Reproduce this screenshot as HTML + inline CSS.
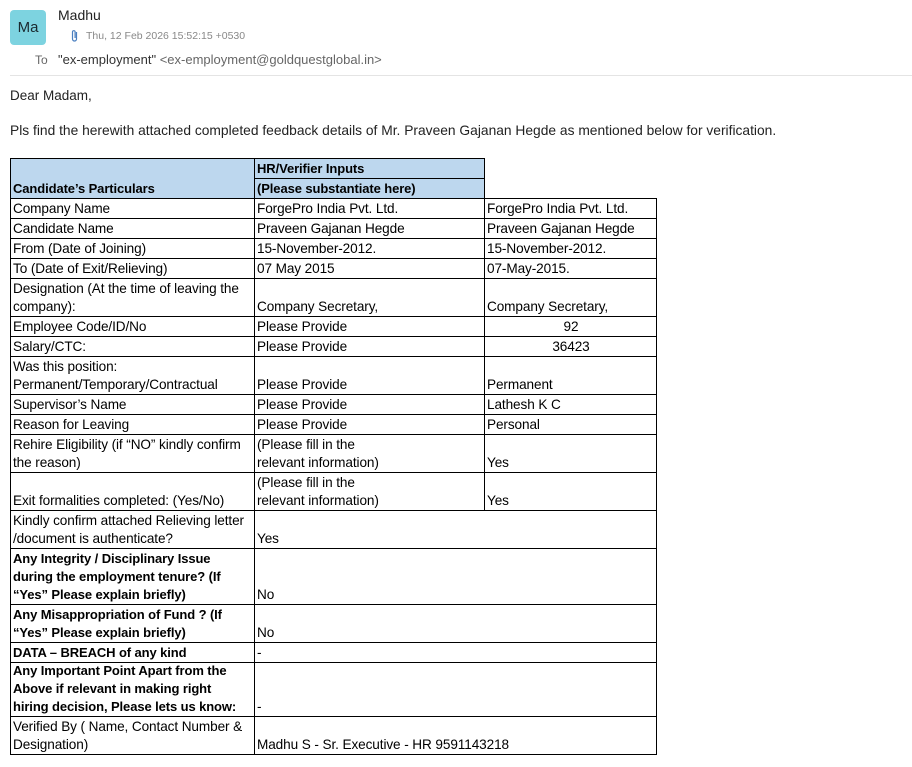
<!DOCTYPE html>
<html><head><meta charset="utf-8"><style>
body{margin:0;background:#fff;font-family:"Liberation Sans",sans-serif;color:#222;width:912px;height:767px;position:relative;overflow:hidden}
.a{position:absolute;white-space:nowrap}
.c{position:absolute;box-sizing:border-box;border:1px solid #000;font-size:13.6px;line-height:18px;color:#000;padding:0 1px 0 2px;display:flex;flex-direction:column;justify-content:flex-end;white-space:nowrap;letter-spacing:-0.1px;overflow:hidden}
.b{font-weight:bold;font-size:13px}
.ctr{text-align:center}
</style></head><body>
<div class="a" style="left:10px;top:10px;width:36px;height:35px;background:#7dd3e0;border-radius:4px;font-size:15px;line-height:35px;text-align:center;color:#1a2a30">Ma</div>
<div class="a" style="left:58px;top:7px;font-size:14px;color:#222">Madhu</div>
<svg class="a" style="left:70px;top:29px" width="10" height="14" viewBox="0 0 10 14"><path d="M6.5 3 V10 a2 2 0 0 1 -4 0 V3 a1.3 1.3 0 0 1 2.6 0 V9" fill="none" stroke="#4a7fc0" stroke-width="1.2"/></svg>
<div class="a" style="left:86px;top:30px;font-size:10.5px;color:#888">Thu, 12 Feb 2026 15:52:15 +0530</div>
<div class="a" style="left:35px;top:53px;font-size:12px;color:#666">To</div>
<div class="a" style="left:58px;top:52px;font-size:13px;color:#333">"ex-employment" <span style="color:#666">&lt;ex-employment@goldquestglobal.in&gt;</span></div>
<div class="a" style="left:10px;top:75px;width:902px;height:1px;background:#e4e4e4"></div>
<div class="a" style="left:10px;top:88px;font-size:13.5px;color:#222">Dear Madam,</div>
<div class="a" style="left:10px;top:123px;font-size:13.8px;color:#222">Pls find the herewith attached completed feedback details of Mr. Praveen Gajanan Hegde as mentioned below for verification.</div>

<div class="c b" style="left:10px;top:158px;width:245px;height:41px;background:#bdd7ee">Candidate’s Particulars</div>
<div class="c b" style="left:254px;top:158px;width:231px;height:21px;background:#bdd7ee">HR/Verifier Inputs</div>
<div class="c b" style="left:254px;top:178px;width:231px;height:21px;background:#bdd7ee">(Please substantiate here)</div>

<div class="c" style="left:10px;top:198px;width:245px;height:21px">Company Name</div>
<div class="c" style="left:254px;top:198px;width:231px;height:21px">ForgePro India Pvt. Ltd.</div>
<div class="c" style="left:484px;top:198px;width:173px;height:21px">ForgePro India Pvt. Ltd.</div>

<div class="c" style="left:10px;top:218px;width:245px;height:21px">Candidate Name</div>
<div class="c" style="left:254px;top:218px;width:231px;height:21px">Praveen Gajanan Hegde</div>
<div class="c" style="left:484px;top:218px;width:173px;height:21px">Praveen Gajanan Hegde</div>

<div class="c" style="left:10px;top:238px;width:245px;height:21px">From (Date of Joining)</div>
<div class="c" style="left:254px;top:238px;width:231px;height:21px">15-November-2012.</div>
<div class="c" style="left:484px;top:238px;width:173px;height:21px">15-November-2012.</div>

<div class="c" style="left:10px;top:258px;width:245px;height:21px">To (Date of Exit/Relieving)</div>
<div class="c" style="left:254px;top:258px;width:231px;height:21px">07 May 2015</div>
<div class="c" style="left:484px;top:258px;width:173px;height:21px">07-May-2015.</div>

<div class="c" style="left:10px;top:278px;width:245px;height:39px"><div>Designation (At the time of leaving the</div><div>company):</div></div>
<div class="c" style="left:254px;top:278px;width:231px;height:39px">Company Secretary,</div>
<div class="c" style="left:484px;top:278px;width:173px;height:39px">Company Secretary,</div>

<div class="c" style="left:10px;top:316px;width:245px;height:21px">Employee Code/ID/No</div>
<div class="c" style="left:254px;top:316px;width:231px;height:21px">Please Provide</div>
<div class="c ctr" style="left:484px;top:316px;width:173px;height:21px">92</div>

<div class="c" style="left:10px;top:336px;width:245px;height:21px">Salary/CTC:</div>
<div class="c" style="left:254px;top:336px;width:231px;height:21px">Please Provide</div>
<div class="c ctr" style="left:484px;top:336px;width:173px;height:21px">36423</div>

<div class="c" style="left:10px;top:356px;width:245px;height:39px"><div>Was this position:</div><div>Permanent/Temporary/Contractual</div></div>
<div class="c" style="left:254px;top:356px;width:231px;height:39px">Please Provide</div>
<div class="c" style="left:484px;top:356px;width:173px;height:39px">Permanent</div>

<div class="c" style="left:10px;top:394px;width:245px;height:21px">Supervisor’s Name</div>
<div class="c" style="left:254px;top:394px;width:231px;height:21px">Please Provide</div>
<div class="c" style="left:484px;top:394px;width:173px;height:21px">Lathesh K C</div>

<div class="c" style="left:10px;top:414px;width:245px;height:21px">Reason for Leaving</div>
<div class="c" style="left:254px;top:414px;width:231px;height:21px">Please Provide</div>
<div class="c" style="left:484px;top:414px;width:173px;height:21px">Personal</div>

<div class="c" style="left:10px;top:434px;width:245px;height:39px"><div>Rehire Eligibility (if “NO” kindly confirm</div><div>the reason)</div></div>
<div class="c" style="left:254px;top:434px;width:231px;height:39px"><div>(Please fill in the</div><div>relevant information)</div></div>
<div class="c" style="left:484px;top:434px;width:173px;height:39px">Yes</div>

<div class="c" style="left:10px;top:472px;width:245px;height:39px">Exit formalities completed: (Yes/No)</div>
<div class="c" style="left:254px;top:472px;width:231px;height:39px"><div>(Please fill in the</div><div>relevant information)</div></div>
<div class="c" style="left:484px;top:472px;width:173px;height:39px">Yes</div>

<div class="c" style="left:10px;top:510px;width:245px;height:39px"><div>Kindly confirm attached Relieving letter</div><div>/document is authenticate?</div></div>
<div class="c" style="left:254px;top:510px;width:403px;height:39px">Yes</div>

<div class="c b" style="left:10px;top:548px;width:245px;height:57px"><div>Any Integrity / Disciplinary Issue</div><div>during the employment tenure? (If</div><div>“Yes” Please explain briefly)</div></div>
<div class="c" style="left:254px;top:548px;width:403px;height:57px">No</div>

<div class="c b" style="left:10px;top:604px;width:245px;height:39px"><div>Any Misappropriation of Fund ? (If</div><div>“Yes” Please explain briefly)</div></div>
<div class="c" style="left:254px;top:604px;width:403px;height:39px">No</div>

<div class="c b" style="left:10px;top:642px;width:245px;height:21px">DATA – BREACH of any kind</div>
<div class="c" style="left:254px;top:642px;width:403px;height:21px">-</div>

<div class="c b" style="left:10px;top:662px;width:245px;height:55px"><div>Any Important Point Apart from the</div><div>Above if relevant in making right</div><div>hiring decision, Please lets us know:</div></div>
<div class="c" style="left:254px;top:662px;width:403px;height:55px">-</div>

<div class="c" style="left:10px;top:716px;width:245px;height:39px"><div>Verified By ( Name, Contact Number &amp;</div><div>Designation)</div></div>
<div class="c" style="left:254px;top:716px;width:403px;height:39px">Madhu S - Sr. Executive - HR 9591143218</div>
</body></html>
